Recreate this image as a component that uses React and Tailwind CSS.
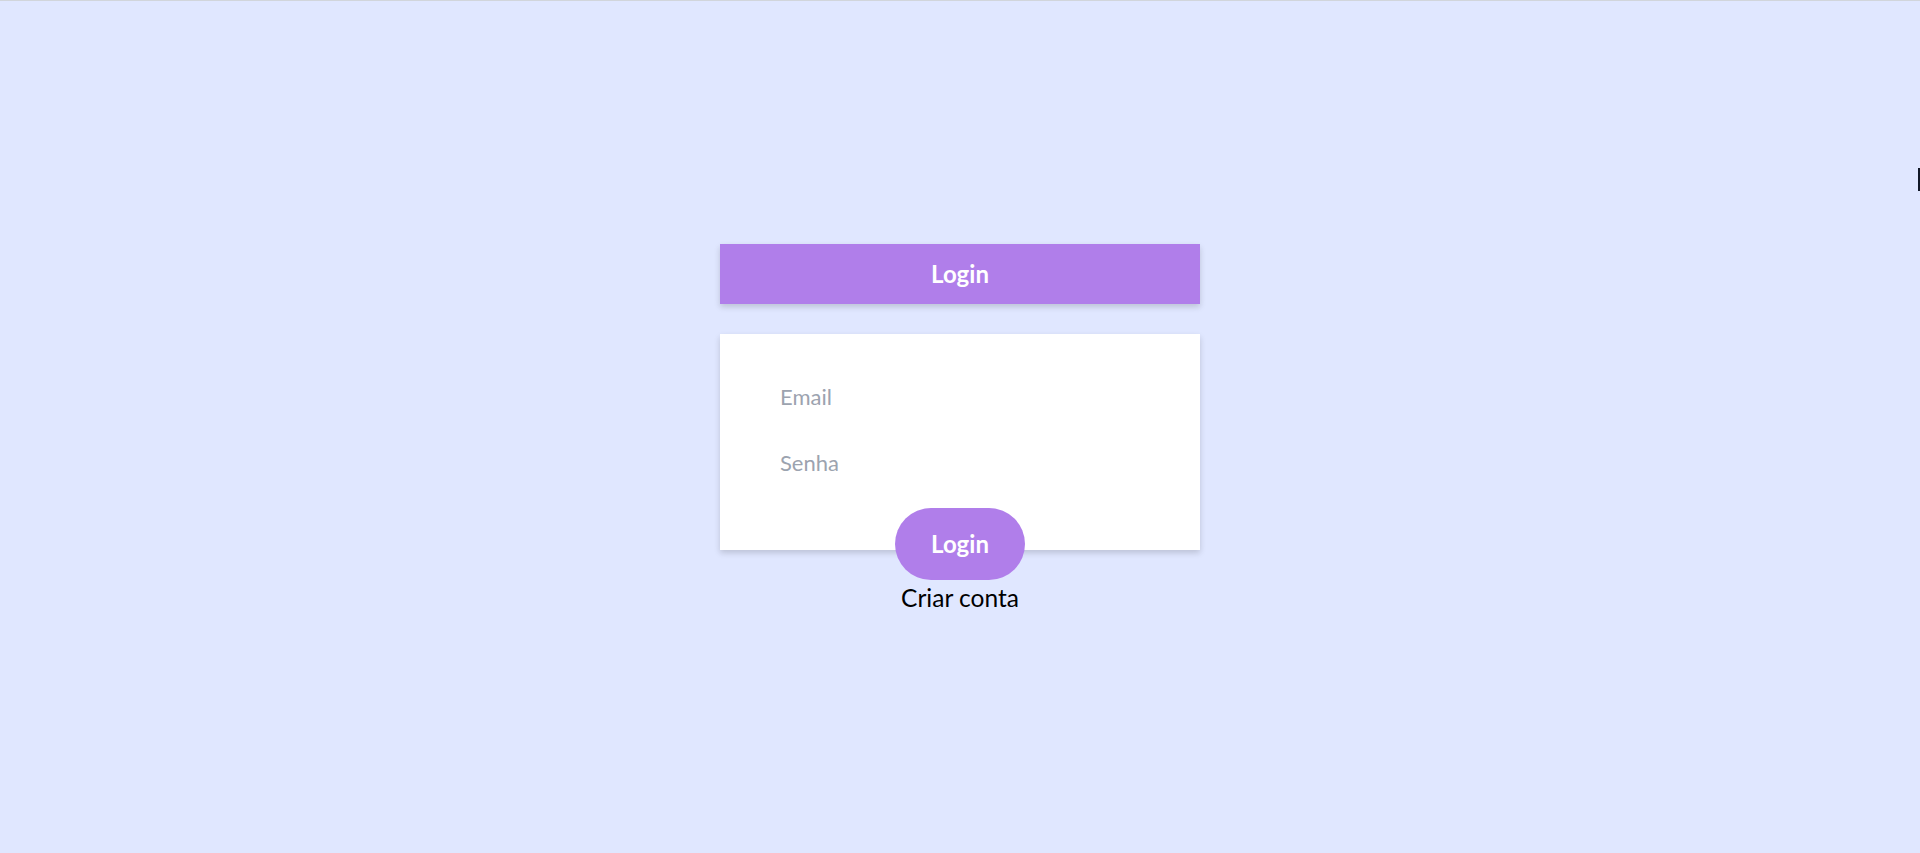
export default function App() {
  return (
    <div
      className="relative min-h-[853px] w-full bg-[#e0e7ff] border-t border-[#d1d5db] flex flex-col items-center"
      style={{ fontFamily: "Lato, 'Open Sans', sans-serif" }}
    >
      <div className="mt-[243px] w-[480px] h-[60px] bg-[#b07eea] flex items-center justify-center shadow-[0_3px_6px_rgba(0,0,0,0.16)]">
        <span className="text-white text-[24px] font-bold">Login</span>
      </div>
      <div className="mt-[30px] w-[480px] bg-white shadow-[0_3px_6px_rgba(0,0,0,0.16)] flex flex-col pt-[50px]">
        <input
          type="text"
          placeholder="Email"
          className="ml-[60px] w-[360px] h-[26px] text-[22px] leading-[26px] outline-none placeholder:text-[#9ca3af] bg-transparent"
        />
        <input
          type="password"
          placeholder="Senha"
          className="ml-[60px] mt-[40px] w-[360px] h-[26px] text-[22px] leading-[26px] outline-none placeholder:text-[#9ca3af] bg-transparent"
        />
        <button className="self-center mt-[32px] -mb-[30px] w-[130px] h-[72px] rounded-full bg-[#b07eea] text-white text-[24px] font-bold relative z-10">
          Login
        </button>
      </div>
      <div className="mt-[33px] text-[24.5px] leading-[29px] text-black">Criar conta</div>
      <div className="absolute right-0 top-[167px] w-[2px] h-[23px] bg-[#111827]" />
    </div>
  );
}
